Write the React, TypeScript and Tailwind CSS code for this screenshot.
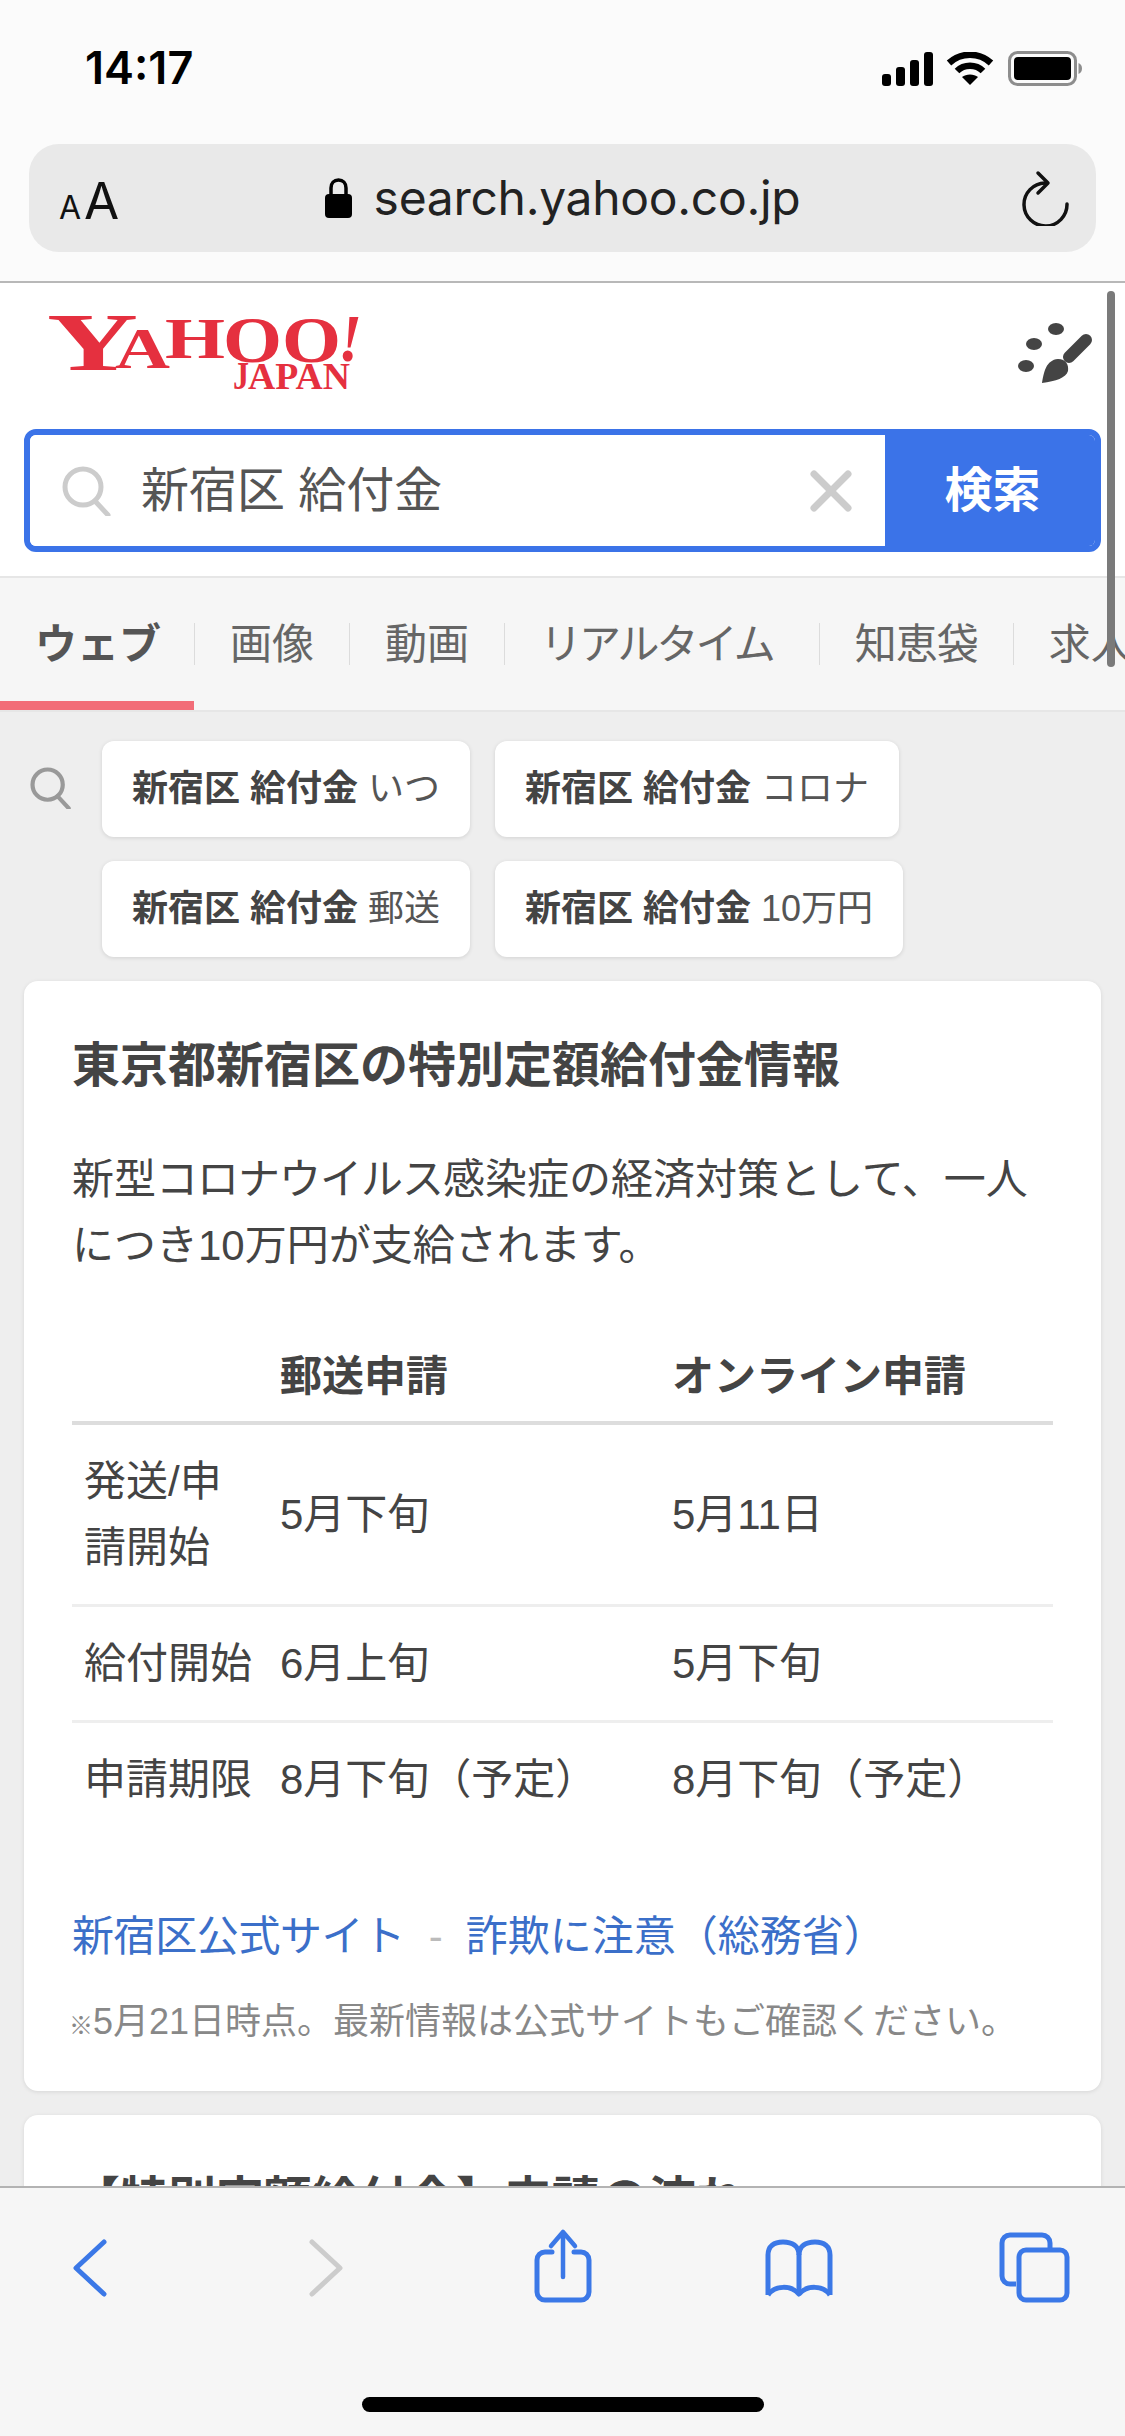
import React from "react";

function Glass({ size, color, sw }: { size: number; color: string; sw: number }) {
  return (
    <svg width={size} height={size} viewBox="0 0 50 50" fill="none" className="shrink-0">
      <circle cx="21" cy="21" r="18" stroke={color} strokeWidth={sw} />
      <path d="M33 35 L46 49" stroke={color} strokeWidth={sw} strokeLinecap="round" />
    </svg>
  );
}

function Logo() {
  const f = "Liberation Serif, serif";
  const c = "#e5303f";
  const common = { fontFamily: f, fontWeight: 700, fill: c, lengthAdjust: "spacingAndGlyphs" as const };
  return (
    <svg width="330" height="90" viewBox="0 0 330 90" className="overflow-visible">
      <text x="7" y="60" fontSize="82" textLength="91" {...common}>Y</text>
      <text x="75" y="58" fontSize="56" textLength="55" {...common}>A</text>
      <text x="125" y="48" fontSize="58" textLength="60" {...common}>H</text>
      <text x="183" y="52" fontSize="65" textLength="118" {...common}>OO</text>
      <text x="298" y="51" fontSize="68" textLength="24" fontStyle="italic" {...common}>!</text>
      <text x="193" y="79" fontSize="40" textLength="16" {...common}>J</text>
      <text x="208" y="79" fontSize="37" textLength="102" {...common}>APAN</text>
    </svg>
  );
}

function Brush() {
  return (
    <svg width="80" height="70" viewBox="0 0 80 70" fill="#444">
      <ellipse cx="40" cy="9" rx="8" ry="6" />
      <ellipse cx="18" cy="24" rx="8" ry="6" />
      <ellipse cx="10" cy="46" rx="8" ry="6" />
      <path d="M70 20 L53 37" stroke="#444" strokeWidth="12" strokeLinecap="round" fill="none" />
      <path d="M26 63 C28 52 30 40 42 39 C50 39 53 45 52 51 C50 58 40 61 26 63Z" />
    </svg>
  );
}

function Chip({ extra }: { extra: string }) {
  return (
    <div className="h-[96px] px-[30px] flex items-center bg-white rounded-[12px] shadow-[0_1px_4px_rgba(0,0,0,0.12)] text-[36px] text-[#444] whitespace-pre">
      <span className="font-bold">新宿区 給付金</span>
      <span className="text-[#555]"> {extra}</span>
    </div>
  );
}

function Row({ head, a, b, py }: { head: React.ReactNode; a: string; b: string; py: string }) {
  return (
    <tr className="border-b-[3px] border-[#eeeeee] last:border-b-0">
      <td className={`${py} pl-[12px] align-middle`}>{head}</td>
      <td className={`${py} align-middle`}>{a}</td>
      <td className={`${py} align-middle`}>{b}</td>
    </tr>
  );
}

function TabSep() {
  return <div className="w-[1px] h-[42px] self-center shrink-0 bg-[#dcdcdc]" />;
}

export default function App() {
  const blue = "#3b78e7";
  return (
    <div className="w-[1125px] h-[2436px] relative overflow-hidden flex flex-col bg-[#eeeeee] [font-family:'Liberation_Sans','Noto_Sans_CJK_JP',sans-serif] text-[#444]">
      {/* Browser top */}
      <div className="h-[283px] shrink-0 bg-[#fbfbfb] border-b-2 border-[#b8b8b8]">
        <div className="h-[144px] pl-[85px] pr-[43px] pt-[44px] flex justify-between items-start">
          <span className="text-[45px] leading-[48px] font-semibold text-black [font-family:Inter,sans-serif]">14:17</span>
          <div className="flex items-center gap-[14px] pt-[7px]">
            <svg width="52" height="34" viewBox="0 0 52 34" fill="#000" className="translate-x-[2px]">
              <rect x="0" y="22" width="9" height="12" rx="3" />
              <rect x="14" y="15" width="9" height="19" rx="3" />
              <rect x="28" y="8" width="9" height="26" rx="3" />
              <rect x="42" y="0" width="9" height="34" rx="3" />
            </svg>
            <svg width="48" height="34" viewBox="0 0 48 34" fill="none" stroke="#000" strokeWidth="6.5">
              <path d="M3 11 C15 0 33 0 45 11" />
              <path d="M11 19 C18 12 30 12 37 19" />
              <path d="M24 33 L16 25 C20 21.5 28 21.5 32 25 Z" fill="#000" stroke="none" />
            </svg>
            <svg width="74" height="35" viewBox="0 0 74 35" fill="none">
              <rect x="1.5" y="1.5" width="66" height="32" rx="8" stroke="#8d8d8d" strokeWidth="3" />
              <rect x="6" y="6" width="57" height="23" rx="4" fill="#000" />
              <path d="M70.5 12 C73 13 74 15 74 17.5 C74 20 73 22 70.5 23 Z" fill="#8d8d8d" />
            </svg>
          </div>
        </div>
        <div className="mx-[29px] h-[108px] rounded-[30px] bg-[#e9e9e9] flex items-center justify-between pl-[30px] pr-[26px]">
          <div className="flex items-baseline text-[#111] [font-family:Inter,sans-serif] w-[60px] translate-y-[2px]">
            <span className="text-[32px] leading-none">A</span>
            <span className="ml-[3px] text-[51px] leading-none">A</span>
          </div>
          <div className="flex items-center gap-[22px] -translate-x-[7px]">
            <svg width="27" height="40" viewBox="0 0 27 40">
              <path d="M6 18 V10 C6 5 9 2 13.5 2 C18 2 21 5 21 10 V18" fill="none" stroke="#000" strokeWidth="3.5" />
              <rect x="0" y="16" width="27" height="24" rx="4" fill="#000" />
            </svg>
            <span className="text-[48px] leading-none tracking-[-0.3px] text-[#222] [font-family:Inter,sans-serif]">search.yahoo.co.jp</span>
          </div>
          <svg width="50" height="56" viewBox="0 0 50 56" fill="none" stroke="#111" strokeWidth="3.5" strokeLinecap="round" strokeLinejoin="round">
            <path d="M25 13 A21.5 21.5 0 1 0 47 34" />
            <path d="M18 3 L28 13 L18 23" />
          </svg>
        </div>
      </div>

      {/* Page */}
      <div className="flex-1 min-h-0 overflow-hidden">
        <div className="h-[293px] bg-white px-[24px] pb-[24px] flex flex-col justify-between">
          <div className="flex justify-between items-start pl-[16px] pr-[5px] pt-[27px]">
            <Logo />
            <div className="pt-[10px]">
              <Brush />
            </div>
          </div>
          <div className="h-[123px] shrink-0 flex rounded-[12px] overflow-hidden border-[6px] border-[#3b73e8]">
            <div className="flex-1 bg-white flex items-center pl-[32px] pr-[33px] text-[48px] text-[#555]">
              <Glass size={50} color="#cccccc" sw={5} />
              <span className="ml-[29px] flex-1 whitespace-pre">新宿区 給付金</span>
              <svg width="42" height="42" viewBox="0 0 42 42" stroke="#cccccc" strokeWidth="7" strokeLinecap="round">
                <path d="M4 4 L38 38 M38 4 L4 38" />
              </svg>
            </div>
            <div className="w-[210px] pl-[5px] bg-[#3b73e8] flex items-center justify-center text-[48px] font-bold text-white">検索</div>
          </div>
        </div>

        <div className="h-[136px] bg-[#f6f6f6] border-y-2 border-[#e6e6e6] flex items-stretch text-[42px] text-[#666] whitespace-nowrap overflow-hidden">
          <div className="w-[194px] shrink-0 px-[35px] pt-[9px] flex items-center border-b-[9px] border-[#f26d78] font-bold text-[#555]">ウェブ</div>
          <TabSep />
          <div className="px-[35px] flex items-center shrink-0">画像</div>
          <TabSep />
          <div className="px-[35px] flex items-center shrink-0">動画</div>
          <TabSep />
          <div className="pl-[35px] pr-[46px] flex items-center shrink-0 tracking-[-3px]">リアルタイム</div>
          <TabSep />
          <div className="px-[35px] flex items-center shrink-0 tracking-[-1px]">知恵袋</div>
          <TabSep />
          <div className="px-[35px] flex items-center shrink-0">求人</div>
        </div>

        <div className="relative pt-[29px] px-[24px]">
          <div className="flex">
            <div className="w-[78px] shrink-0 pt-[26px] pl-[6px]">
              <Glass size={42} color="#999999" sw={5} />
            </div>
            <div className="flex flex-col gap-[24px]">
              <div className="flex gap-[25px]">
                <Chip extra="いつ" />
                <Chip extra="コロナ" />
              </div>
              <div className="flex gap-[25px]">
                <Chip extra="郵送" />
                <Chip extra="10万円" />
              </div>
            </div>
          </div>

          <div className="mt-[24px] h-[1110px] bg-white rounded-[14px] shadow-[0_1px_4px_rgba(0,0,0,0.1)] pt-[49px] px-[48px]">
            <h2 className="text-[48px] leading-[72px] font-bold">東京都新宿区の特別定額給付金情報</h2>
            <p className="mt-[45px] text-[42px] leading-[66px]">
              新型<span className="tracking-[-1px]">コロナウイルス</span>感染症の経済対策として、一人
              <br />
              につき10万円が支給されます。
            </p>
            <table className="mt-[65px] w-[981px] table-fixed text-[42px] leading-[66px]">
              <thead>
                <tr className="border-b-4 border-[#dddddd]">
                  <th className="w-[208px] pb-[11px]"></th>
                  <th className="w-[392px] pb-[11px] text-left font-bold">郵送申請</th>
                  <th className="pb-[11px] text-left font-bold">オンライン申請</th>
                </tr>
              </thead>
              <tbody>
                <Row py="pt-[24px] pb-[23px]" head={<>発送/申<br />請開始</>} a="5月下旬" b="5月11日" />
                <Row py="pt-[24px] pb-[23px]" head="給付開始" a="6月上旬" b="5月下旬" />
                <Row py="py-[24px]" head="申請期限" a="8月下旬（予定）" b="8月下旬（予定）" />
              </tbody>
            </table>
            <div className="mt-[67px] text-[42px] leading-[66px] text-[#3b6fc9] flex">
              <span className="tracking-[-0.4px]">新宿区公式サイト</span>
              <span className="ml-[24px] mr-[23px] text-[#bbbbbb]">-</span>
              <span>詐欺に注意（総務省）</span>
            </div>
            <p className="mt-[25px] text-[36px] leading-[54px] text-[#888888] -ml-[3px]">
              <span className="text-[24px]">※</span>5月21日時点。最新情報は公式サイトもご確認ください。
            </p>
          </div>

          <div className="mt-[24px] h-[300px] bg-white rounded-[14px] shadow-[0_1px_4px_rgba(0,0,0,0.1)] pt-[49px] px-[48px]">
            <h2 className="text-[48px] leading-[72px] font-bold">【特別定額給付金】申請の流れ</h2>
          </div>
        </div>
      </div>

      {/* Bottom bar */}
      <div className="h-[250px] shrink-0 bg-[#f6f6f6] border-t-2 border-[#b3b3b3] flex flex-col">
        <div className="flex justify-between px-[50px] pt-[39px]">
          <svg width="80" height="80" viewBox="0 0 80 80" fill="none" stroke={blue} strokeWidth="5" strokeLinecap="round" strokeLinejoin="round">
            <path d="M54 15 L26 41 L54 67" />
          </svg>
          <svg width="80" height="80" viewBox="0 0 80 80" fill="none" stroke="#cccccc" strokeWidth="5" strokeLinecap="round" strokeLinejoin="round">
            <path d="M26 15 L54 41 L26 67" />
          </svg>
          <svg width="80" height="80" viewBox="0 0 80 80" fill="none" stroke={blue} strokeWidth="4.5" strokeLinecap="round" strokeLinejoin="round">
            <path d="M29 25 H22 A8 8 0 0 0 14 33 V65 A8 8 0 0 0 22 73 H58 A8 8 0 0 0 66 65 V33 A8 8 0 0 0 58 25 H51" strokeWidth="5" />
            <path d="M40 50 V5 M28 19 L40 5 L52 19" />
          </svg>
          <svg width="80" height="80" viewBox="0 0 80 80" fill="none" stroke={blue} strokeWidth="5" strokeLinejoin="round">
            <path d="M9 68 V28 C9 19 15 15 24 15 C33 15 40 19 40 28 V65" />
            <path d="M40 28 C40 19 47 15 56 15 C65 15 71 19 71 28 V68" />
            <path d="M9 68 C16 58 32 58 40 67 C48 58 64 58 71 68" />
          </svg>
          <svg width="80" height="80" viewBox="0 0 80 80" fill="none" stroke={blue} strokeWidth="5">
            <path d="M21 57 H15 A8 8 0 0 1 7 49 V16 A8 8 0 0 1 15 8 H47 A8 8 0 0 1 55 16 V22" />
            <rect x="24" y="23" width="48" height="50" rx="7" />
          </svg>
        </div>
        <div className="mt-auto mb-[24px] mx-auto w-[402px] h-[15px] rounded-full bg-black" />
      </div>

      {/* Scroll indicator */}
      <div className="absolute left-[1107px] top-[291px] w-[8px] h-[376px] rounded-full bg-[#7a7a7a]" />
    </div>
  );
}
